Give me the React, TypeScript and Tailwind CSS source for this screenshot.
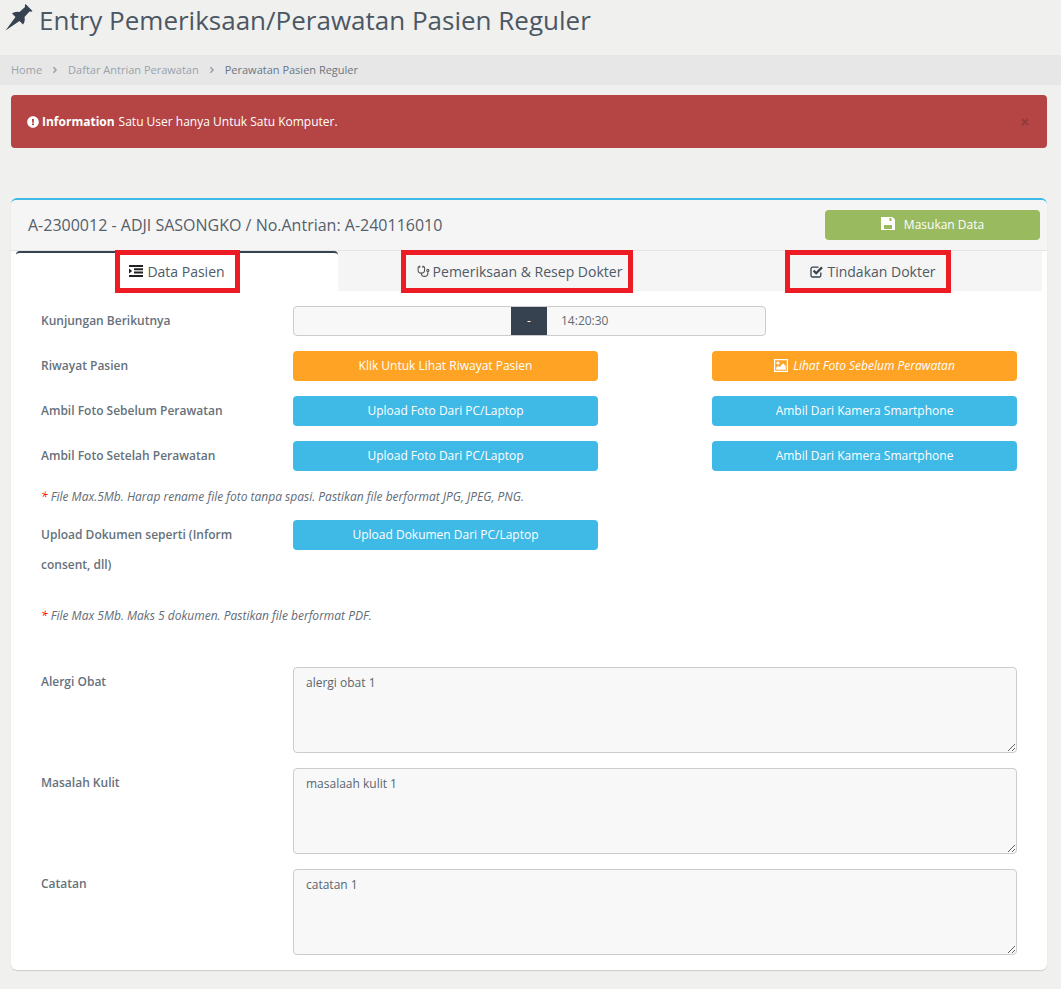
import React from 'react';
import { FaExclamationCircle, FaTimes, FaAngleRight } from 'react-icons/fa';
import { Stethoscope } from 'lucide-react';

const btnBlue =
  'flex h-[30px] w-[305px] items-center justify-center rounded-[4px] bg-[#3fb9e6] text-[12px] text-white';
const btnOrange =
  'flex h-[30px] w-[305px] items-center justify-center rounded-[4px] bg-[#ffa324] text-[12px] text-white';
const labelCls = 'w-[252px] shrink-0 text-[12px] leading-[30px] font-semibold text-[#66717b]';
const areaCls =
  'block h-[86px] w-[724px] rounded-[4px] border border-[#cccccc] bg-[#f8f8f8] px-[12px] py-[6px] text-[12px] leading-[18px] text-[#58666e]';

const PinIcon = () => (
  <svg viewBox="0 0 28 28" className="h-[28px] w-[28px] text-[#36424f]" fill="currentColor">
    <path d="M0.5 27.5 L10.5 14 L7 10.5 Q10 8 14.5 9 L20 4 Q19.5 2 20.5 1 L27.5 8 Q26.5 9 24.5 8.5 L19.5 14 Q20.5 18 18 21.5 L14.5 18 Z" />
  </svg>
);

const IndentIcon = () => (
  <svg viewBox="0 0 14 12" className="mr-[4px] h-[12px] w-[14px] text-[#222]" fill="currentColor">
    <path d="M0 0h14v2H0zM5 3.3h9v2H5zM5 6.6h9v2H5zM0 10h14v2H0zM0 3.4l3.2 2.6L0 8.6z" />
  </svg>
);

const CheckSquareIcon = () => (
  <svg viewBox="0 0 13 13" className="mr-[4px] h-[13px] w-[13px] text-[#36424f]" fill="none" stroke="currentColor">
    <path d="M10.8 7.5v3a1.5 1.5 0 0 1-1.5 1.5H2.5A1.5 1.5 0 0 1 1 10.5V3.7a1.5 1.5 0 0 1 1.5-1.5h6" strokeWidth="1.3" />
    <path d="M3.6 5.6l2.6 2.6 5.8-5.8" strokeWidth="2.2" />
  </svg>
);

const SaveIcon = () => (
  <svg viewBox="0 0 14 13" className="mr-[9px] -mt-[3px] h-[13px] w-[14px] text-white" fill="currentColor">
    <path
      fillRule="evenodd"
      d="M0 0h11.5L14 2.5V13H0zM8.5 1v3h2V1zM3 8v4h8V8z"
    />
  </svg>
);

const ImageIcon = () => (
  <svg viewBox="0 0 14 13" className="mr-[5px] -mt-[2px] h-[13px] w-[14px] text-white" fill="currentColor">
    <path fillRule="evenodd" d="M0 0h14v13H0zM1.2 1.2v10.6h11.6V1.2z" />
    <circle cx="4" cy="4" r="1.6" />
    <path d="M2.2 10.8V8.8l2-2 1.4 1.4L9 4.2l2.8 2.8v3.8z" />
  </svg>
);

const App = () => {
  return (
    <div className="min-h-[989px] bg-[#f0f0ef] pb-[19px] font-['Open_Sans',sans-serif] text-[#5f6b76]">
      {/* Judul */}
      <div className="flex h-[55px] items-start pl-[5px] pt-[3px]">
        <PinIcon />
        <h1 className="ml-[6px] text-[26px] leading-[35px] text-[#4b5763]">
          Entry Pemeriksaan/Perawatan Pasien Reguler
        </h1>
      </div>

      {/* Breadcrumb */}
      <div className="flex h-[30px] items-center bg-[#e7e7e7] pl-[11px] text-[11px] text-[#98a2ab]">
        <span>Home</span>
        <FaAngleRight className="mx-[8px] h-[10px] w-[10px]" />
        <span>Daftar Antrian Perawatan</span>
        <FaAngleRight className="mx-[8px] h-[10px] w-[10px]" />
        <span className="text-[#6a7682]">Perawatan Pasien Reguler</span>
      </div>

      {/* Alert */}
      <div className="mx-[11px] mt-[10px] flex h-[53px] w-[1036px] items-center justify-between rounded-[4px] bg-[#b54545] pl-[16px] pr-[17px] text-[12px] text-white">
        <div className="flex items-center">
          <FaExclamationCircle className="mr-[3px] h-[12px] w-[12px]" />
          <b className="mr-[4px] font-bold">Information</b>
          Satu User hanya Untuk Satu Komputer.
        </div>
        <FaTimes className="h-[10px] w-[10px] text-[#8f3a3a]" />
      </div>

      {/* Card */}
      <div className="mx-[11px] mt-[50px] h-[772px] w-[1036px] rounded-[6px] border-t-2 border-[#3fb9e6] bg-white shadow-[0_1px_1px_rgba(0,0,0,0.15)]">
        <div className="box-content flex h-[50px] items-center justify-between rounded-t-[6px] border-b border-[#e4e4e4] bg-[#f5f5f5] pl-[17px] pr-[7px]">
          <span className="text-[16px] text-[#55606b]">A-2300012 - ADJI SASONGKO / No.Antrian: A-240116010</span>
          <button className="flex h-[30px] w-[215px] items-center justify-center rounded-[4px] bg-[#99ba5f] text-[12px] text-white">
            <SaveIcon />
            Masukan Data
          </button>
        </div>

        {/* Tabs */}
        <div className="ml-[5px] flex h-[40px] w-[1026px] text-[14px] text-[#4e5a66]">
          <div className="flex w-[322px] items-center justify-center rounded-t-[4px] border-t-2 border-[#36424f] bg-white">
            <span className="-mt-[2px] ml-[1px] flex h-[43px] items-center border-[5px] border-[#ed1c24] pl-[9px] pr-[10px]">
              <IndentIcon />
              Data Pasien
            </span>
          </div>
          <div className="flex w-[358px] items-center justify-center bg-[#f5f5f5]">
            <span className="flex h-[43px] items-center border-[5px] border-[#ed1c24] pl-[11px] pr-[6px]">
              <Stethoscope className="mr-[3px] h-[13px] w-[13px] text-[#555]" strokeWidth={2} />
              Pemeriksaan &amp; Resep Dokter
            </span>
          </div>
          <div className="flex w-[346px] items-center justify-center bg-[#f5f5f5]">
            <span className="mr-[2px] flex h-[43px] items-center border-[5px] border-[#ed1c24] pl-[20px] pr-[10px]">
              <CheckSquareIcon />
              Tindakan Dokter
            </span>
          </div>
        </div>

        {/* Form */}
        <div className="pl-[30px] pt-[15px]">
          <div className="flex h-[30px]">
            <div className={labelCls}>Kunjungan Berikutnya</div>
            <div className="flex h-[30px] w-[473px] overflow-hidden rounded-[4px] border border-[#cccccc] bg-[#f8f8f8] text-[12px]">
              <div className="w-[217px]" />
              <div className="-my-[1px] flex w-[36px] items-center justify-center bg-[#36424f] text-white">-</div>
              <div className="flex items-center pl-[14px]">14:20:30</div>
            </div>
          </div>

          <div className="mt-[15px] flex h-[30px]">
            <div className={labelCls}>Riwayat Pasien</div>
            <button className={btnOrange}>Klik Untuk Lihat Riwayat Pasien</button>
            <button className={`${btnOrange} ml-[114px] italic`}>
              <ImageIcon />
              Lihat Foto Sebelum Perawatan
            </button>
          </div>

          <div className="mt-[15px] flex h-[30px]">
            <div className={labelCls}>Ambil Foto Sebelum Perawatan</div>
            <button className={btnBlue}>Upload Foto Dari PC/Laptop</button>
            <button className={`${btnBlue} ml-[114px]`}>Ambil Dari Kamera Smartphone</button>
          </div>

          <div className="mt-[15px] flex h-[30px]">
            <div className={labelCls}>Ambil Foto Setelah Perawatan</div>
            <button className={btnBlue}>Upload Foto Dari PC/Laptop</button>
            <button className={`${btnBlue} ml-[114px]`}>Ambil Dari Kamera Smartphone</button>
          </div>

          <p className="mt-[17px] h-[18px] text-[12px] leading-[18px] italic">
            <span className="text-[#f00]">*</span> File Max.5Mb. Harap rename file foto tanpa spasi. Pastikan file berformat JPG, JPEG, PNG.
          </p>

          <div className="mt-[14px] flex">
            <div className={labelCls}>
              Upload Dokumen seperti (Inform
              <br />
              consent, dll)
            </div>
            <button className={btnBlue}>Upload Dokumen Dari PC/Laptop</button>
          </div>

          <p className="mt-[27px] h-[18px] text-[12px] leading-[18px] italic">
            <span className="text-[#f00]">*</span> File Max 5Mb. Maks 5 dokumen. Pastikan file berformat PDF.
          </p>

          <div className="mt-[42px] flex">
            <div className={labelCls}>Alergi Obat</div>
            <textarea className={areaCls} defaultValue="alergi obat 1" />
          </div>
          <div className="mt-[15px] flex">
            <div className={labelCls}>Masalah Kulit</div>
            <textarea className={areaCls} defaultValue="masalaah kulit 1" />
          </div>
          <div className="mt-[15px] flex">
            <div className={labelCls}>Catatan</div>
            <textarea className={areaCls} defaultValue="catatan 1" />
          </div>
        </div>
      </div>
    </div>
  );
};

export default App;
